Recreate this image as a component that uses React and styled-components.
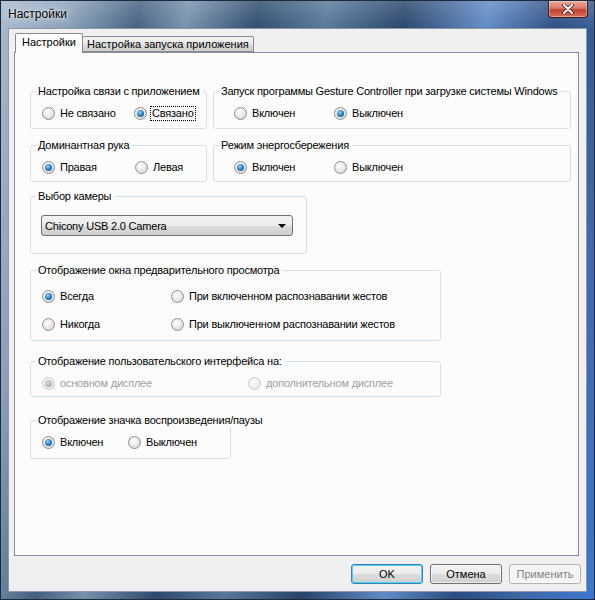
import React from "react";
import styled, { createGlobalStyle } from "styled-components";

const Global = createGlobalStyle`
  html, body { margin: 0; padding: 0; }
  body { font-family: "Liberation Sans", Arial, sans-serif; font-size: 11px; }
`;

const Window = styled.div`
  width: 595px;
  height: 600px;
  box-sizing: border-box;
  display: flex;
  flex-direction: column;
  border: 1px solid #1d2a3a;
  background:
    linear-gradient(180deg, rgba(255,255,255,0.18) 0%, rgba(255,255,255,0) 30px),
    linear-gradient(100deg, #a7b9cc 0%, #8aa1b9 10%, #435f80 20%, #7690ad 27%, #2d4a6e 37%, #56769a 47%, #27436a 58%, #5f8bc6 70%, #2a4c80 80%, #3e68a8 90%, #3a78d0 100%);
`;

const TitleBar = styled.div`
  height: 27px;
  display: flex;
  justify-content: space-between;
  align-items: flex-start;
  padding-left: 7px;
`;

const Title = styled.span`
  margin-top: 6px;
  font-size: 12px;
  color: #000;
  text-shadow: 0 0 8px rgba(255,255,255,0.9), 0 0 3px rgba(255,255,255,0.8);
`;

const CloseButton = styled.div`
  width: 40px;
  height: 17px;
  margin-right: 6px;
  box-sizing: border-box;
  border: 1px solid #4a1a14;
  border-top: none;
  border-radius: 0 0 4px 4px;
  background: linear-gradient(180deg, #e9a99b 0%, #d97a68 45%, #c4402d 55%, #d2705a 100%);
  box-shadow: inset 0 0 0 1px rgba(255,255,255,0.35);
  display: flex;
  align-items: center;
  justify-content: center;
`;

const Client = styled.div`
  flex: 1;
  margin: 0 7px 7px 7px;
  background: #f0f0f0;
  border: 1px solid #8e9aa8;
  display: flex;
  flex-direction: column;
  padding: 4px 7px 0 5px;
`;

const TabStrip = styled.div`
  display: flex;
  align-items: flex-end;
  height: 19px;
  padding-left: 1px;
  position: relative;
  z-index: 1;
`;

const Tab = styled.div`
  box-sizing: border-box;
  height: ${p => (p.$active ? "20px" : "16px")};
  margin-bottom: ${p => (p.$active ? "-1px" : "0")};
  padding: ${p => (p.$active ? "2px 6px 0 6px" : "1px 4px 0 4px")};
  border: 1px solid #898c95;
  border-bottom: ${p => (p.$active ? "none" : "1px solid #898c95")};
  border-left: ${p => (p.$first ? "1px solid #898c95" : "none")};
  border-radius: 2px 2px 0 0;
  background: ${p =>
    p.$active ? "#fcfcfc" : "linear-gradient(180deg, #f2f2f2 0%, #ebebeb 50%, #dddddd 51%, #cfcfcf 100%)"};
  color: #000;
  white-space: nowrap;
`;

const TabPanel = styled.div`
  height: 504px;
  box-sizing: border-box;
  border: 1px solid #898c95;
  background: #fcfcfc;
  padding: 31px 0 0 15px;
  display: flex;
  flex-direction: column;
  align-items: flex-start;
`;

const Row = styled.div`
  display: flex;
  gap: 6px;
  margin-top: ${p => p.$top || 0}px;
`;

const Group = styled.fieldset`
  margin: ${p => p.$top || 0}px 0 0 0;
  width: ${p => p.$w}px;
  box-sizing: border-box;
  min-width: 0;
  border: 1px solid #d5dfe5;
  border-radius: 3px;
  padding: 0;
`;

const Legend = styled.legend`
  margin-left: 5px;
  padding: 0 3px 0 2px;
  line-height: 14px;
  color: #000;
  letter-spacing: -0.2px;
  white-space: nowrap;
`;

const Body = styled.div`
  display: flex;
  flex-direction: column;
  gap: ${p => p.$gap || 0}px;
  padding: ${p => p.$pt || 7}px 0 ${p => p.$pb || 7}px ${p => p.$pl || 11}px;
`;

const Options = styled.div`
  display: flex;
  align-items: center;
  height: 16px;
`;

const Option = styled.label`
  display: flex;
  align-items: center;
  gap: 4px;
  width: ${p => (p.$w ? `${p.$w}px` : "auto")};
  color: ${p => (p.$disabled ? "#a0a0a0" : "#000")};
  letter-spacing: -0.2px;
  white-space: nowrap;
`;

const Dot = styled.span`
  width: 13px;
  height: 13px;
  box-sizing: border-box;
  border-radius: 50%;
  flex: none;
  border: 1px solid ${p => (p.$disabled ? "#c8c8c8" : "#8f8f8f")};
  background: ${p =>
    p.$disabled
      ? "radial-gradient(circle at 40% 35%, #fafafa 0%, #ececec 60%, #e0e0e0 100%)"
      : "radial-gradient(circle at 40% 35%, #ffffff 0%, #e8e8e8 50%, #cdcdcd 100%)"};
  display: flex;
  align-items: center;
  justify-content: center;

  &::after {
    content: "";
    display: ${p => (p.$checked ? "block" : "none")};
    width: 7px;
    height: 7px;
    border-radius: 50%;
    background: ${p =>
      p.$disabled
        ? "radial-gradient(circle at 40% 35%, #dcdcdc 0%, #b4b4b4 60%, #9a9a9a 100%)"
        : "radial-gradient(circle at 40% 35%, #9ad8f8 0%, #2d86c8 45%, #0b4a86 100%)"};
  }
`;

const Caption = styled.span`
  padding: 0 1px;
  outline: ${p => (p.$focus ? "1px dotted #000" : "none")};
  outline-offset: 0;
  line-height: 13px;
`;

const Combo = styled.div`
  width: 252px;
  height: 21px;
  box-sizing: border-box;
  border: 1px solid #707070;
  border-radius: 3px;
  background: linear-gradient(180deg, #f2f2f2 0%, #ebebeb 50%, #dddddd 51%, #cfcfcf 100%);
  display: flex;
  align-items: center;
  justify-content: space-between;
  padding: 0 6px 0 3px;
  color: #000;
  letter-spacing: -0.2px;
`;

const Arrow = styled.span`
  width: 0;
  height: 0;
  border-left: 4px solid transparent;
  border-right: 4px solid transparent;
  border-top: 4px solid #000;
`;

const ButtonBar = styled.div`
  display: flex;
  justify-content: flex-end;
  gap: 7px;
  padding-top: 8px;
  margin-right: -2px;
`;

const Button = styled.div`
  width: 72px;
  height: 20px;
  box-sizing: border-box;
  border: 1px solid ${p => (p.$default ? "#3c7fb1" : p.$disabled ? "#adb2b5" : "#707070")};
  border-radius: 3px;
  background: ${p =>
    p.$disabled ? "#f4f4f4" : "linear-gradient(180deg, #f2f2f2 0%, #ebebeb 50%, #dddddd 51%, #cfcfcf 100%)"};
  box-shadow: ${p => (p.$default ? "inset 0 0 0 1px #48d4ff" : "inset 0 0 0 1px rgba(255,255,255,0.6)")};
  color: ${p => (p.$disabled ? "#838383" : "#000")};
  display: flex;
  align-items: center;
  justify-content: center;
`;

const Radio = ({ label, checked, disabled, focus, w }) => (
  <Option $w={w} $disabled={disabled}>
    <Dot $checked={checked} $disabled={disabled} />
    <Caption $focus={focus}>{label}</Caption>
  </Option>
);

const App = () => (
  <>
    <Global />
    <Window>
      <TitleBar>
        <Title>Настройки</Title>
        <CloseButton>
          <svg width="12" height="10" viewBox="0 0 12 10">
            <path d="M2 1 L10 9 M10 1 L2 9" stroke="#3a1410" strokeWidth="3.4" strokeLinecap="round" />
            <path d="M2 1 L10 9 M10 1 L2 9" stroke="#ffffff" strokeWidth="2" strokeLinecap="round" />
          </svg>
        </CloseButton>
      </TitleBar>
      <Client>
        <TabStrip>
          <Tab $active $first>Настройки</Tab>
          <Tab>Настройка запуска приложения</Tab>
        </TabStrip>
        <TabPanel>
          <Row>
            <Group $w={177}>
              <Legend>Настройка связи с приложением</Legend>
              <Body>
                <Options>
                  <Radio w={92} label="Не связано" />
                  <Radio label="Связано" checked focus />
                </Options>
              </Body>
            </Group>
            <Group $w={358}>
              <Legend>Запуск программы Gesture Controller при загрузке системы Windows</Legend>
              <Body $pl={20}>
                <Options>
                  <Radio w={100} label="Включен" />
                  <Radio label="Выключен" checked />
                </Options>
              </Body>
            </Group>
          </Row>
          <Row $top={9}>
            <Group $w={177}>
              <Legend>Доминантная рука</Legend>
              <Body $pb={6}>
                <Options>
                  <Radio w={93} label="Правая" checked />
                  <Radio label="Левая" />
                </Options>
              </Body>
            </Group>
            <Group $w={358}>
              <Legend>Режим энергосбережения</Legend>
              <Body $pl={20} $pb={6}>
                <Options>
                  <Radio w={100} label="Включен" checked />
                  <Radio label="Выключен" />
                </Options>
              </Body>
            </Group>
          </Row>
          <Group $w={277} $top={7}>
            <Legend>Выбор камеры</Legend>
            <Body $pt={12} $pb={17} $pl={10}>
              <Combo>
                <span>Chicony USB 2.0 Camera</span>
                <Arrow />
              </Combo>
            </Body>
          </Group>
          <Group $w={411} $top={9}>
            <Legend>Отображение окна предварительного просмотра</Legend>
            <Body $pt={11} $pb={8} $gap={12}>
              <Options>
                <Radio w={129} label="Всегда" checked />
                <Radio label="При включенном распознавании жестов" />
              </Options>
              <Options>
                <Radio w={129} label="Никогда" />
                <Radio label="При выключенном распознавании жестов" />
              </Options>
            </Body>
          </Group>
          <Group $w={411} $top={13}>
            <Legend>Отображение пользовательского интерфейса на:</Legend>
            <Body $pb={5}>
              <Options>
                <Radio w={206} label="основном дисплее" checked disabled />
                <Radio label="дополнительном дисплее" disabled />
              </Options>
            </Body>
          </Group>
          <Group $w={201} $top={16}>
            <Legend>Отображение значка воспроизведения/паузы</Legend>
            <Body $pb={8}>
              <Options>
                <Radio w={86} label="Включен" checked />
                <Radio label="Выключен" />
              </Options>
            </Body>
          </Group>
        </TabPanel>
        <ButtonBar>
          <Button $default>OK</Button>
          <Button>Отмена</Button>
          <Button $disabled>Применить</Button>
        </ButtonBar>
      </Client>
    </Window>
  </>
);

export default App;
